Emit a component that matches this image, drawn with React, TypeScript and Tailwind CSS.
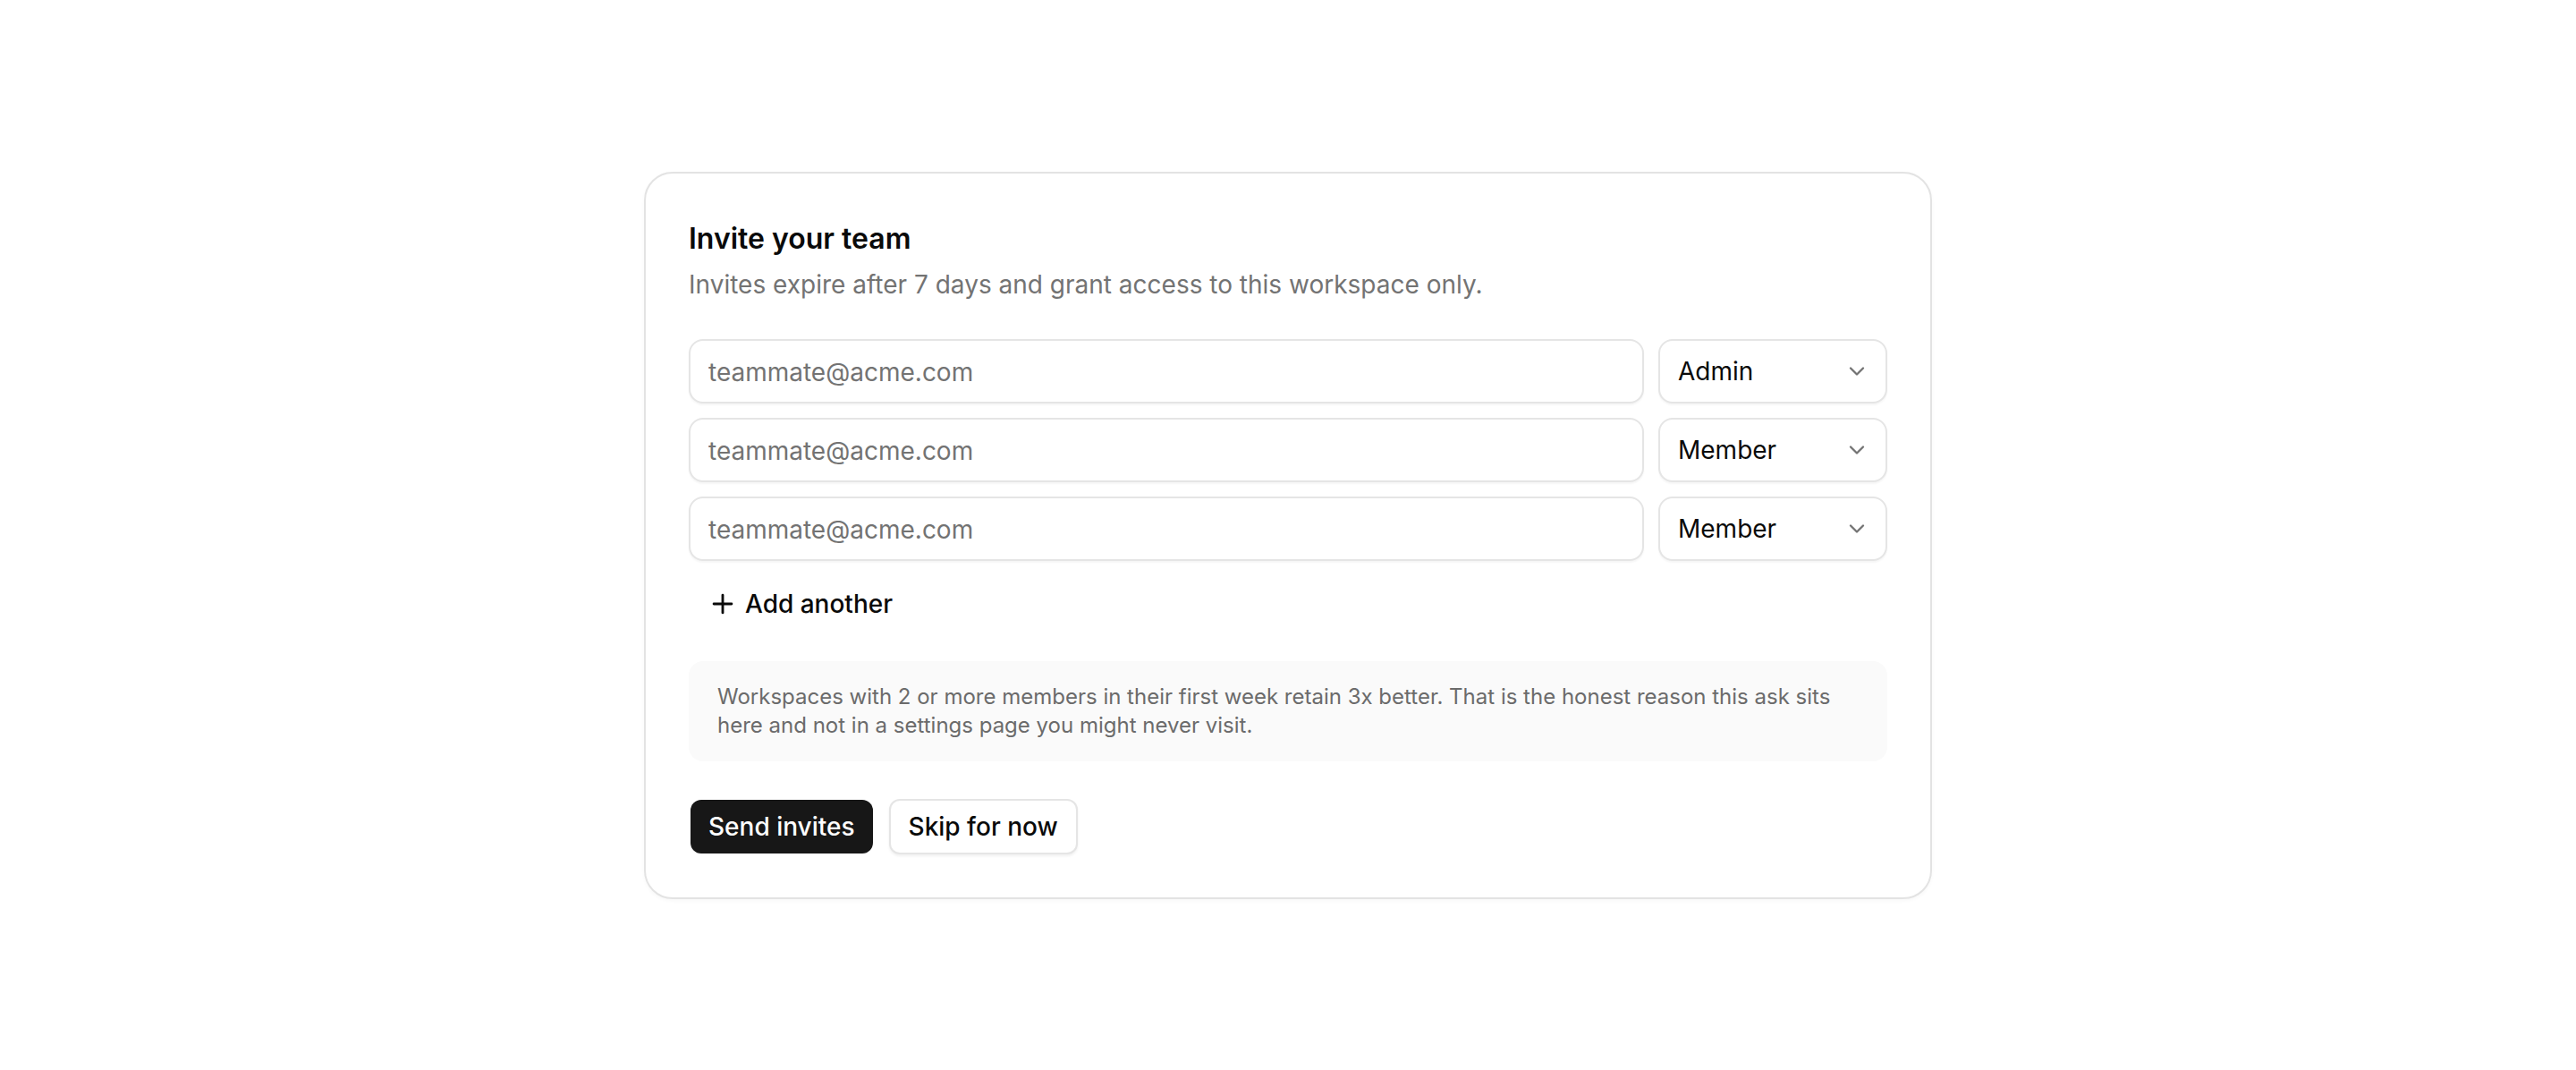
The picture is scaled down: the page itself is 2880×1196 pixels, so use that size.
import { ChevronDown, Plus } from 'lucide-react';

const rows = [
  { id: 1, role: 'Admin' },
  { id: 2, role: 'Member' },
  { id: 3, role: 'Member' },
];

export default function App() {
  return (
    <div
      className="min-h-screen flex items-center justify-center bg-white text-[#0a0a0a]"
      style={{ fontFamily: 'Inter, "Noto Sans", sans-serif' }}
    >
      <div className="w-[1440px] rounded-[32px] border-2 border-[#e3e3e3] bg-white p-12 shadow-[0_2px_4px_rgba(0,0,0,0.03)]">
        <h2 className="text-[32px] leading-[50px] font-semibold">Invite your team</h2>
        <p className="mt-1.5 text-[28px] leading-10 text-[#737373]">
          Invites expire after 7 days and grant access to this workspace only.
        </p>

        <div className="mt-[41px] flex flex-col gap-4">
          {rows.map((row) => (
            <div key={row.id} className="flex gap-4">
              <input
                type="email"
                placeholder="teammate@acme.com"
                className="h-[72px] flex-1 min-w-0 rounded-2xl border-2 border-[#e5e5e5] bg-white px-5 pt-0.5 text-[28px] text-[#0a0a0a] placeholder:text-[#737373] shadow-[0_2px_2px_rgba(0,0,0,0.04)] outline-none"
              />
              <button className="h-[72px] w-64 flex items-center justify-between rounded-2xl border-2 border-[#e5e5e5] bg-white pl-5 pr-[18px] text-[28px] shadow-[0_2px_2px_rgba(0,0,0,0.04)]">
                <span>{row.role}</span>
                <ChevronDown className="w-7 h-7 text-[#737373]" strokeWidth={2} />
              </button>
            </div>
          ))}
        </div>

        <button className="mt-4 h-16 flex items-center gap-2 rounded-xl pl-[21px] pr-6 text-[28px] font-medium">
          <Plus className="w-[34px] h-[34px]" strokeWidth={2} />
          Add another
        </button>

        <div className="mt-8 rounded-2xl bg-[#fafafa] px-8 py-6 text-[24px] leading-8 text-[#6b6b6b]">
          Workspaces with 2 or more members in their first week retain 3x better. That is the honest
          reason this ask sits here and not in a settings page you might never visit.
        </div>

        <div className="mt-[42px] flex h-[62px] items-center gap-[18px] pl-[2px]">
          <button className="h-[60px] rounded-xl bg-[#171717] px-5 text-[28px] font-medium text-white">
            Send invites
          </button>
          <button className="h-[62px] rounded-xl border-2 border-[#e5e5e5] bg-white px-5 text-[28px] font-medium shadow-[0_2px_3px_rgba(0,0,0,0.06)]">
            Skip for now
          </button>
        </div>
      </div>
    </div>
  );
}
